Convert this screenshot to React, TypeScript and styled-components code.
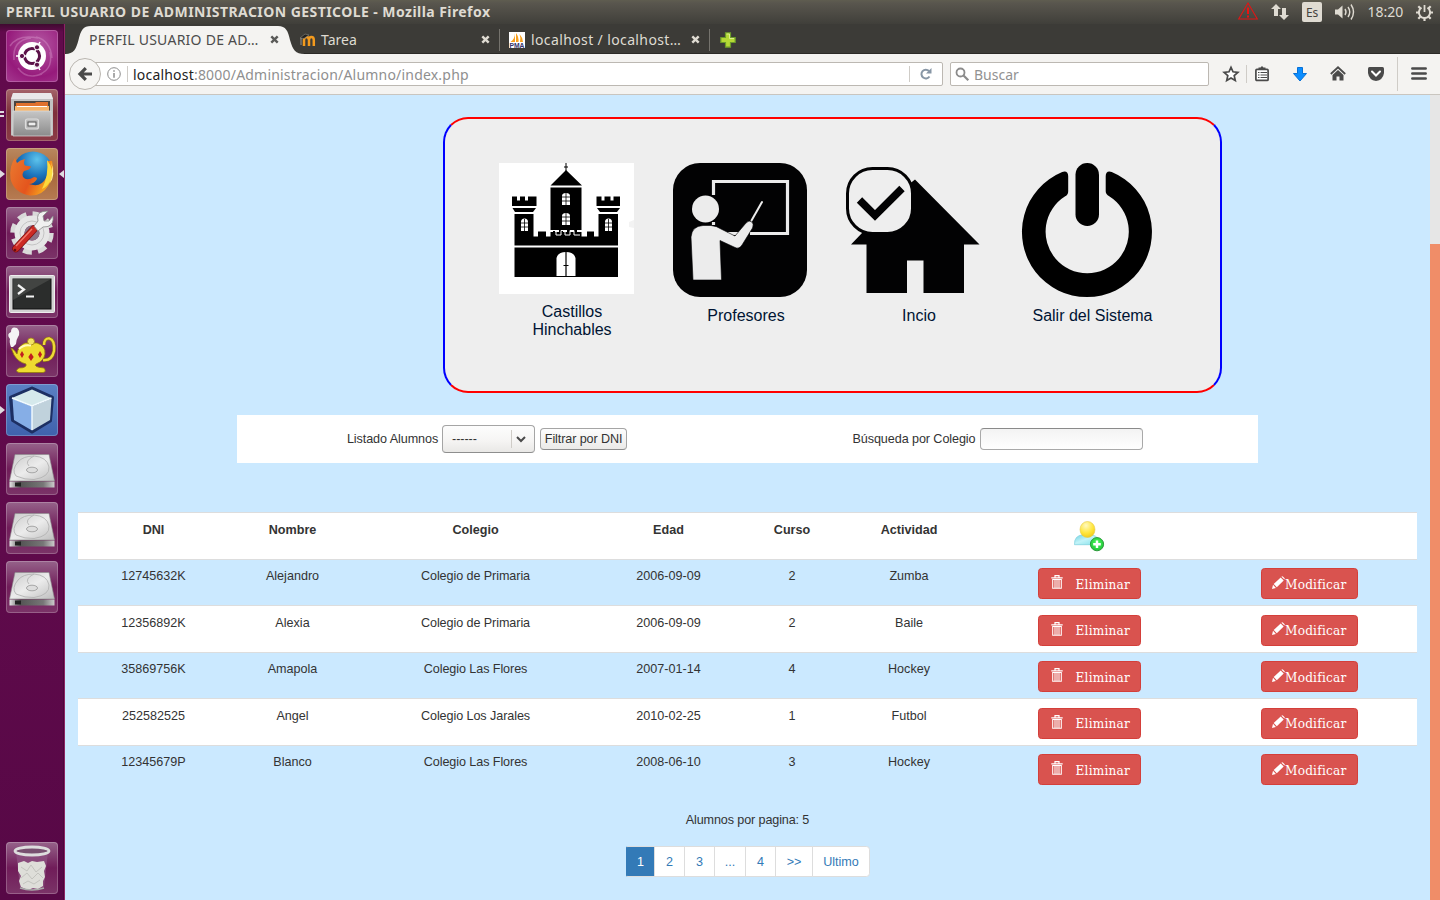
import React from 'react';
import styled, { createGlobalStyle } from 'styled-components';

const chromeFont = `'Noto Sans', 'Open Sans', sans-serif`;
const pageFont = `'Liberation Sans', Arial, sans-serif`;
const serifFont = `'DejaVu Serif Condensed', 'DejaVu Serif', serif`;

const GlobalStyle = createGlobalStyle`
  * { box-sizing: border-box; }
  body { margin: 0; background: #cbe9ff; font-family: ${pageFont}; }
  svg { display: block; flex: none; overflow: visible; }
`;

/* ---------- desktop ---------- */

const Desktop = styled.div`
  width: 1440px;
  height: 900px;
  display: flex;
  flex-direction: column;
  overflow: hidden;
`;

const TopPanel = styled.header`
  height: 24px;
  flex: none;
  display: flex;
  align-items: center;
  padding-left: 6px;
  background: linear-gradient(#5f5d50 0, #59564e 3px, #403f3a 24px);
  color: #dfdbd2;
  font-family: ${chromeFont};
`;

const WindowTitle = styled.div`
  flex: 1;
  font-size: 14px;
  font-weight: 700;
  letter-spacing: 0.44px;
  line-height: 24px;
  white-space: nowrap;
`;

const Indicators = styled.div`
  display: flex;
  align-items: center;
  height: 24px;
`;

const Indicator = styled.div<{ $w: number }>`
  width: ${(p) => p.$w}px;
  display: flex;
  justify-content: center;
`;

const Keyboard = styled.div`
  width: 20px;
  height: 20px;
  border-radius: 2px;
  background: #dfdbd2;
  color: #45433e;
  font-size: 12px;
  line-height: 21px;
  text-align: center;
  letter-spacing: -0.3px;
`;

const Clock = styled.span`
  margin-left: 1px;
  font-size: 14px;
  line-height: 24px;
`;

const Body = styled.div`
  flex: 1;
  display: flex;
  min-height: 0;
`;

const Launcher = styled.nav`
  width: 65px;
  flex: none;
  display: flex;
  flex-direction: column;
  gap: 7px;
  padding: 6px 0 6px 6px;
  border-right: 1px solid #8d2464;
  background: linear-gradient(#3f0a30 0, #620a4c 8px, #5f0a4b 60%, #570846 100%);
  box-shadow: inset -1px 0 0 #4d063c;
`;

const Tile = styled.div<{ $bg: string; $last?: boolean }>`
  position: relative;
  width: 52px;
  height: 52px;
  border-radius: 4px;
  background: ${(p) => p.$bg};
  box-shadow: inset 0 0 0 1px rgba(255, 255, 255, 0.22);
  ${(p) => p.$last && 'margin-top: auto;'}
`;

const Pip = styled.i<{ $side: 'left' | 'right'; $y?: number }>`
  position: absolute;
  top: ${(p) => p.$y ?? 22}px;
  ${(p) => (p.$side === 'left' ? 'left: -6px;' : 'right: -6px;')}
  border: 4px solid transparent;
  ${(p) =>
    p.$side === 'left'
      ? 'border-left: 5px solid #dfdbe0; border-right: 0;'
      : 'border-right: 5px solid #dfdbe0; border-left: 0;'}
`;

const Dash = styled.i<{ $y: number }>`
  position: absolute;
  left: -6px;
  top: ${(p) => p.$y}px;
  width: 4px;
  height: 2px;
  background: #dfdbe0;
`;

/* ---------- browser ---------- */

const Browser = styled.section`
  flex: 1;
  display: flex;
  flex-direction: column;
  min-width: 0;
`;

const TabStrip = styled.div`
  height: 30px;
  flex: none;
  display: flex;
  background: #3c3b37;
  box-shadow: inset 0 -1px 0 #2b2a27;
  font-family: ${chromeFont};
  font-size: 14px;
`;

const Tab = styled.div<{ $w: number; $active?: boolean; $line?: boolean }>`
  position: relative;
  width: ${(p) => p.$w}px;
  height: 30px;
  display: flex;
  align-items: center;
  padding: 1px 10px 0 ${(p) => (p.$active ? 24 : 0)}px;
  color: ${(p) => (p.$active ? '#4c4c4c' : '#dfdbd2')};
  white-space: nowrap;
  ${(p) =>
    p.$line &&
    `&::after { content: ''; position: absolute; right: 0; top: 5px; width: 1px; height: 22px; background: #75736d; }`}
`;

const TabShape = styled.svg`
  position: absolute;
  left: 0;
  top: 2px;
`;

const TabLabel = styled.span<{ $ls?: number }>`
  position: relative;
  flex: 1;
  margin-bottom: 1px;
  letter-spacing: ${(p) => p.$ls ?? 0}px;
`;

const Favicon = styled.span`
  display: flex;
  margin-right: 5px;
`;

const CloseWrap = styled.span`
  position: relative;
  display: flex;
`;

const NewTab = styled.div`
  display: flex;
  align-items: center;
  padding: 2px 0 0 10px;
`;

const Toolbar = styled.div`
  height: 41px;
  flex: none;
  display: flex;
  align-items: center;
  padding: 0 0 1px 4px;
  background: #f4f3f1;
  border-bottom: 1px solid #c9c5bf;
  font-family: ${chromeFont};
  font-size: 14px;
`;

const BackButton = styled.div`
  position: relative;
  z-index: 1;
  width: 32px;
  height: 32px;
  flex: none;
  border: 1px solid #bab6b0;
  border-radius: 50%;
  background: #f6f5f3;
  display: flex;
  align-items: center;
  justify-content: center;
`;

const Field = styled.div<{ $w: number; $overlap?: boolean }>`
  width: ${(p) => p.$w}px;
  height: 24px;
  flex: none;
  display: flex;
  align-items: center;
  border: 1px solid #bcb8b2;
  border-radius: 2px;
  background: #fff;
  ${(p) => (p.$overlap ? 'margin-left: -8px; padding-left: 13px;' : 'margin-left: 7px; padding-left: 4px;')}
  color: #8f8f8f;
`;

const Rule = styled.i<{ $h: number; $m?: string }>`
  width: 1px;
  height: ${(p) => p.$h}px;
  background: #cfccc7;
  margin: ${(p) => p.$m ?? '0'};
`;

const Address = styled.span`
  flex: 1;
  padding-top: 1px;
  white-space: nowrap;
  letter-spacing: 0.2px;
  b {
    font-weight: 400;
    color: #222;
  }
`;

const Placeholder = styled.span`
  margin-left: 5px;
  padding-top: 1px;
  color: #929292;
`;

const Tools = styled.div`
  flex: 1;
  display: flex;
  align-items: center;
`;

const Tool = styled.span<{ $w: number }>`
  width: ${(p) => p.$w}px;
  display: flex;
  justify-content: center;
`;

/* ---------- page ---------- */

const Viewport = styled.div`
  flex: 1;
  display: flex;
  min-height: 0;
`;

const Page = styled.main`
  width: 1365px;
  padding: 22px 13px 0;
  background: #cbe9ff;
  color: #333;
  font-size: 12.6px;
  line-height: 18px;
`;

const Scrollbar = styled.div`
  width: 10px;
  padding-top: 149px;
  background: #e6e6e6;
`;

const Thumb = styled.div`
  height: 100%;
  background: #f08d68;
`;

const MenuPanel = styled.div`
  width: 779px;
  height: 276px;
  margin-left: 365px;
  padding: 44px 0 0 41px;
  display: grid;
  grid-template-columns: 174px 173px 173.5px 173px;
  align-items: start;
  border: 2px solid;
  border-color: #f00 #00f;
  border-radius: 25px;
  background: #eee;
`;

const MenuItem = styled.a<{ $gap: number }>`
  display: flex;
  flex-direction: column;
  gap: ${(p) => p.$gap}px;
  padding-left: 13px;
  color: #001433;
  font-size: 16px;
  line-height: 18px;
`;

const Caption = styled.span`
  width: 146px;
  text-align: center;
  white-space: pre-line;
`;

const FilterBar = styled.form`
  width: 1021px;
  height: 48px;
  margin: 22px 0 49.4px 159px;
  display: grid;
  grid-template-columns: 500px 521px;
  background: #fff;
`;

const FilterGroup = styled.div`
  display: flex;
  align-items: center;
  justify-content: center;
  gap: 4px;
  white-space: nowrap;
  letter-spacing: -0.08px;
`;

const Combo = styled.div`
  width: 93px;
  height: 28px;
  display: flex;
  align-items: center;
  border: 1px solid #a5a5a5;
  border-bottom-color: #8e8e8e;
  border-radius: 4px;
  background: linear-gradient(#fdfdfd, #f6f5f4 55%, #e9e8e6);
  padding-left: 9px;
`;

const ComboValue = styled.span`
  flex: 1;
`;

const FilterButton = styled.button`
  width: 87px;
  height: 22px;
  margin-left: 1px;
  padding: 0;
  border: 1px solid #a5a5a5;
  border-bottom-color: #8e8e8e;
  border-radius: 4px;
  background: linear-gradient(#fdfdfd, #ebeae8);
  color: #333;
  font: 12.6px/18px ${pageFont};
  letter-spacing: -0.1px;
  white-space: nowrap;
`;

const SearchInput = styled.input`
  width: 163px;
  height: 22px;
  border: 1px solid #a9a9a9;
  border-top-color: #8a8a8a;
  border-radius: 4px;
  background: linear-gradient(#f3f3f3, #fff);
`;

const Table = styled.div`
  width: 1339px;
`;

const Row = styled.div<{ $head?: boolean; $white?: boolean }>`
  height: 46.5px;
  display: grid;
  grid-template-columns: 151px 127px 239px 147px 100px 134px 226px 215px;
  border-top: 1px solid #ddd;
  background: ${(p) => (p.$white ? '#fff' : 'transparent')};
  font-weight: ${(p) => (p.$head ? 700 : 400)};
`;

const Cell = styled.div<{ $tight?: boolean }>`
  display: flex;
  justify-content: center;
  align-items: flex-start;
  padding-top: 7.4px;
  letter-spacing: ${(p) => (p.$tight ? '-0.08px' : 'normal')};
`;

const DangerButton = styled.button<{ $w: number; $pad: number; $gap?: number }>`
  width: ${(p) => p.$w}px;
  height: 31px;
  margin-top: 1px;
  padding: 0 0 0 ${(p) => p.$pad}px;
  display: flex;
  align-items: center;
  gap: ${(p) => p.$gap ?? 0}px;
  border: 1px solid #d43f3a;
  border-radius: 3.6px;
  background: #d9534f;
  color: #fff;
  font-family: ${serifFont};
  font-stretch: condensed;
  font-size: 13.5px;
  letter-spacing: 0.2px;
  line-height: 18px;
  svg {
    margin-bottom: 3px;
  }
`;

const PageInfo = styled.p`
  width: 1339px;
  margin: 19.6px 0 17px;
  text-align: center;
  letter-spacing: -0.12px;
`;

const Pager = styled.div`
  display: flex;
  height: 31px;
  margin-left: 547px;
`;

const PageLink = styled.a<{ $w: number; $active?: boolean }>`
  width: ${(p) => p.$w}px;
  border: 1px solid ${(p) => (p.$active ? '#337ab7' : '#ddd')};
  margin-left: ${(p) => (p.$active ? 1 : -1)}px;
  background: ${(p) => (p.$active ? '#337ab7' : '#fff')};
  color: ${(p) => (p.$active ? '#fff' : '#337ab7')};
  line-height: 30px;
  text-align: center;
  &:first-child {
    border-color: #ddd #337ab7 #ddd #337ab7;
    border-radius: 2px 0 0 2px;
  }
  &:last-child {
    border-radius: 0 3.6px 3.6px 0;
  }
`;

/* ---------- drawings ---------- */

const Close = ({ color }: { color: string }) => (
  <svg width="9" height="9" viewBox="0 0 9 9">
    <path d="M1.3 1.3l6.4 6.4M7.7 1.3L1.3 7.7" stroke={color} strokeWidth="2.4" />
  </svg>
);

const MoodleIcon = () => (
  <svg width="16" height="16" viewBox="0 0 16 16">
    <path d="M4 14V8Q4 5 6.400 5T9 8V14M9 8Q9 5 11.400 5T13.800 8V14" fill="none" stroke="#f39a1d" strokeWidth="2.500" />
    <path d="M0 6l5-4 4 1-5 3.500z" fill="#222" stroke="#8a8880" strokeWidth=".6" />
    <path d="M1 6v7" stroke="#aaa" strokeWidth=".8" />
  </svg>
);

const PmaText = styled.text`
  font: 700 6.5px ${pageFont};
`;

const PmaIcon = () => (
  <svg width="16" height="16" viewBox="0 0 16 16">
    <rect width="16" height="16" fill="#fff" />
    <path d="M6 1C6 5 4.500 8 1.500 10H6zM7 1q3 4 2.500 9H7zM10.500 2q3.500 4 3.500 8h-3q1-4-.5-8z" fill="#f7a01d" />
    <PmaText x="0.5" y="16" textLength="15" lengthAdjust="spacingAndGlyphs" fill="#34356b">PMA</PmaText>
  </svg>
);

const CastleIcon = () => (
  <svg width="135" height="131" viewBox="0 0 135 131">
    <rect width="135" height="131" fill="#fff" />
    <path
      d="M67 7L83 22.500H51.500zM51.500 24.500H82.500V67H78V72H75V67H71V72H68V67H64V72H60V67H56V72H54V67H51.500z
      M13 33.500h5v4h3v-4h5v4h3v-4h8.500V43H13zM13.500 45h23.500l-3 4H16zM97.500 33.500h5v4h3v-4h6v4h3v-4h6.500V43H97.500zM98 45h23l-3 4h-17z
      M15.500 51h19v22.500H39v-5h8v5h4.500V69h31v4.500H88v-5h7v5h4.500V51H119V82.500H15.500z
      M15.500 84.500H119V114H15.500z"
      fill="#000"
    />
    <path d="M67 0v8M65 4h4" stroke="#000" strokeWidth="1" />
    <path d="M52 67.500h5v4.500h5v-4.500h4v4.500h5v-4.500h4v4.500h6" fill="none" stroke="#fff" strokeWidth="1" />
    <path
      d="M63 42v-9q0-3 4-3t4 3v9zM63 62v-9q0-3 4-3t4 3v9zM22 68v-9q0-3.500 3.500-3.500T29 59v9zM106 68v-9q0-3.500 3.500-3.500T113 59v9z
      M57.500 113V95q1.500-6 9.500-6t9.500 6v18z"
      fill="#fff"
    />
    <path
      d="M67 30v12M63 34h8M63 38h8M67 50v12M63 54h8M63 58h8M25.500 56v12M22 60h7M22 64h7M109.500 56v12M106 60h7M106 64h7"
      stroke="#000"
      strokeWidth=".8"
    />
    <path d="M67 89v24M64.500 102.500h5" stroke="#000" strokeWidth="1.2" />
    <path d="M130 59l5-2v8l-5-1z" fill="#f3f3f3" />
  </svg>
);

const TeacherIcon = () => (
  <svg width="134" height="134" viewBox="0 0 134 134">
    <rect width="134" height="134" rx="27" fill="#020203" />
    <path d="M40.500 32V18.500H114.500V70.500H77M66 70.500H55M40.500 62V59" fill="none" stroke="#ececec" strokeWidth="3.2" />
    <circle cx="32.500" cy="46" r="14.500" fill="#020203" />
    <circle cx="32.500" cy="46" r="13.500" fill="#ececec" />
    <path
      d="M18 74Q19 63 30 62.500H38Q44 63 48 66L62 73 73 60Q76 56.500 79 59 81 61 79.500 65L69 82Q66 87 61 84L47 77.500 48.500 117H20z"
      fill="#ececec"
      stroke="#020203"
      strokeWidth=".6"
    />
    <path d="M78.500 57.500L89 39" stroke="#ececec" strokeWidth="2" strokeLinecap="round" />
  </svg>
);

const HomeCheckIcon = () => (
  <svg width="134" height="134" viewBox="0 0 134 134">
    <path d="M69 16.500L133.500 81.500H118V130H77.500V97.500H61V130H20.500V81.500H5L62 22z" fill="#020203" />
    <rect x="1.500" y="5.500" width="65" height="65" rx="25" fill="#eee" stroke="#020203" strokeWidth="3" />
    <path d="M13.500 37L29 52.500 56 25.500" fill="none" stroke="#020203" strokeWidth="7.600" />
  </svg>
);

const PowerIcon = () => (
  <svg width="134" height="134" viewBox="0 0 134 134">
    <path
      d="M41.500 9.700Q47.500 8 47.500 14V29Q47.500 32.500 44.500 34A41.600 41.600 0 1 0 88.500 34Q85 32 85 29V14Q85 8 91 9.700A65 65 0 1 1 41.500 9.700z"
      fill="#000"
      transform="translate(0.7 -0.7)"
    />
    <rect x="55.500" y="0" width="23.500" height="63" rx="11.700" fill="#000" />
  </svg>
);

const AddUserIcon = () => (
  <svg width="30" height="32" viewBox="0 0 30 32">
    <defs>
      <radialGradient id="head" cx=".4" cy=".25" r=".8">
        <stop offset="0" stopColor="#fff9c0" />
        <stop offset=".6" stopColor="#ffe63a" />
        <stop offset="1" stopColor="#f0c818" />
      </radialGradient>
      <linearGradient id="torso" x2="1" y2="1">
        <stop offset="0" stopColor="#6fd2e2" />
        <stop offset=".45" stopColor="#c2f3f8" />
        <stop offset="1" stopColor="#7adfe8" />
      </linearGradient>
      <radialGradient id="badge" cx=".5" cy=".4" r=".6">
        <stop offset="0" stopColor="#4dfa5e" />
        <stop offset="1" stopColor="#20c438" />
      </radialGradient>
    </defs>
    <g transform="translate(0 -0.8)">
      <path d="M.5 24.500Q0 15 9.500 14.500H18Q26 17 26 24.500z" fill="url(#torso)" stroke="#7cd0dc" strokeWidth=".7" />
      <ellipse cx="13.500" cy="9.300" rx="7.500" ry="8" fill="url(#head)" stroke="#e6c94a" strokeWidth=".6" />
      <circle cx="23" cy="24" r="6.600" fill="url(#badge)" stroke="#2d9a3c" strokeWidth="1" />
      <path d="M23 20.200v7.600M19.200 24h7.600" stroke="#fff" strokeWidth="2.400" />
    </g>
  </svg>
);

const TrashGlyph = () => (
  <svg width="12" height="14" viewBox="0 0 12 14">
    <path d="M.3 2.800h11.400M4 2.500V.7h4v1.800" fill="none" stroke="#fff" strokeWidth="1.200" />
    <path d="M1.700 4v9.300h8.600V4M4 4.500v9M6 4.500v9M8 4.500v9M1.500 4.500h9" fill="none" stroke="#fff" strokeWidth="1.050" />
  </svg>
);

const PencilGlyph = () => (
  <svg width="13" height="13" viewBox="0 0 13 13">
    <path d="M0 13l1-4.200L3.900 12zM1.700 8L8.700 1.400l3 3L4.800 11.200zM9.400.8q.8-1 1.700-.1l1.300 1.300q.8.8 0 1.600z" fill="#fff" />
  </svg>
);

const Disk = () => (
  <svg width="52" height="52" viewBox="0 0 52 52">
    <defs>
      <linearGradient id="diskTop" x2="1" y2="1">
        <stop offset="0" stopColor="#c9c9c9" />
        <stop offset=".5" stopColor="#ececec" />
        <stop offset="1" stopColor="#bdbdbd" />
      </linearGradient>
      <linearGradient id="diskFront">
        <stop offset="0" stopColor="#e6e6e6" />
        <stop offset=".25" stopColor="#555" />
        <stop offset=".75" stopColor="#777" />
        <stop offset="1" stopColor="#ccc" />
      </linearGradient>
    </defs>
    <path d="M9 11.500H43L48.500 38H3.500z" fill="url(#diskTop)" stroke="#8b8b8b" strokeWidth=".6" />
    <path d="M3.500 38.500h45v6h-45z" fill="url(#diskFront)" />
    <path d="M9 39.500h6v4H9z" fill="#222" />
    <path d="M10 33Q5 27 12 19 17 13 28 13 41 14 43 24 44 34 28 36.500 19 37 10 33M28 13Q18 18 23 23" fill="none" stroke="#b3b3b3" strokeWidth=".9" />
    <ellipse cx="26" cy="27" rx="5.500" ry="2.800" fill="#ddd" stroke="#a6a6a6" />
  </svg>
);

const UbuntuIcon = () => (
  <svg width="52" height="52" viewBox="0 0 52 52">
    <path d="M8 30Q6 10 25 8M44 22Q48 42 28 46M12 38Q20 50 36 44M30 7Q44 10 46 28M4 16Q12 4 32 8" fill="none" stroke="#e2a9d6" strokeWidth="1.500" opacity=".35" />
    <circle cx="26" cy="26" r="14" fill="#fff" />
    <circle cx="26" cy="26" r="7.500" fill="none" stroke="#5c1249" strokeWidth="3.200" />
    <path d="M26 26L34 12M26 26L34 40M26 26H10" stroke="#fff" strokeWidth="1.500" />
    <circle cx="26" cy="26" r="5.800" fill="#fff" />
    <g fill="#5c1249" stroke="#fff" strokeWidth="1">
      <circle cx="16" cy="26" r="2.600" />
      <circle cx="31" cy="17.300" r="2.600" />
      <circle cx="31" cy="34.700" r="2.600" />
    </g>
  </svg>
);

const FilesIcon = () => (
  <svg width="52" height="52" viewBox="0 0 52 52">
    <defs>
      <linearGradient id="cabinet" x2="0" y2="1">
        <stop offset="0" stopColor="#c6c6c6" />
        <stop offset="1" stopColor="#8b8b8b" />
      </linearGradient>
    </defs>
    <path d="M7 4h38l2 6v36.500H5V10z" fill="#c2c2c2" />
    <path d="M7 4h38l2 6H5z" fill="#e9e9e9" />
    <path d="M8 12h36v10H8z" fill="#4b4540" />
    <path d="M10 14h19l1-1h12v9H10z" fill="#e0712d" />
    <path d="M9 17h34v5H9z" fill="#f6b46a" />
    <path d="M11 17.500h30" stroke="#fff" />
    <path d="M7 22h38v25H7z" fill="url(#cabinet)" stroke="#ddd" strokeWidth=".7" />
    <rect x="19.500" y="30" width="13" height="10" rx="2" fill="#bbb" stroke="#ddd" strokeWidth="1.200" />
    <rect x="22" y="33" width="8" height="4" fill="#eee" stroke="#555" />
  </svg>
);

const FirefoxIcon = () => (
  <svg width="52" height="52" viewBox="0 0 52 52">
    <defs>
      <radialGradient id="globe" cx=".6" cy=".2" r=".8">
        <stop offset="0" stopColor="#5cc3ec" />
        <stop offset=".5" stopColor="#1d75bd" />
        <stop offset="1" stopColor="#0c2f6b" />
      </radialGradient>
      <linearGradient id="fox" x1="0" y1="0" x2="1" y2=".4">
        <stop offset="0" stopColor="#ea7a30" />
        <stop offset=".6" stopColor="#e4551d" />
        <stop offset="1" stopColor="#f7a81e" />
      </linearGradient>
    </defs>
    <circle cx="27" cy="23.500" r="20" fill="url(#globe)" />
    <path d="M46 13Q50 28 42 38 36 48 24 47.500 8 45 4.500 31 3 18 9 10L11 15Q14 12 19 11 17 15 19 17.500L25 18.500Q24 22 18 23 15 27 18 30 22 33 28 29 31 29 31 31 28 36 23 36 35 40 40 30 44 23 42 13z" fill="url(#fox)" />
    <path d="M41 12Q49 22 45 32 41 39 36 41 43 27 41 12z" fill="#fbd93d" />
    <path d="M45 14Q50 27 44 35 48 24 45 14z" fill="#fff3a0" />
  </svg>
);

const SettingsIcon = () => (
  <svg width="52" height="52" viewBox="0 0 52 52">
    <circle cx="26" cy="26" r="18.500" fill="none" stroke="#d9d9d9" strokeWidth="6.500" strokeDasharray="8.500 6.030" />
    <circle cx="26" cy="26" r="12.500" fill="none" stroke="#e6e6e6" strokeWidth="10" />
    <circle cx="26" cy="26" r="12" fill="none" stroke="#c4c4c4" strokeWidth="1" />
    <circle cx="26" cy="26" r="7.500" fill="#8b7387" />
    <path d="M10 41.500L28 22" stroke="#7e1212" strokeWidth="7.500" strokeLinecap="round" />
    <path d="M10 41.500L28 22" stroke="#cc2a24" strokeWidth="6" strokeLinecap="round" />
    <path d="M10 39L26 22" stroke="#f07a6d" strokeWidth="1.300" />
    <path d="M28 19L32 14Q30 6 37 4.500L42 4 37 9 38 14 43 14 47 9Q48 17 42 19.500L37 20 32 24z" fill="#f0f0f0" stroke="#888" strokeWidth=".8" />
    <circle cx="9" cy="43" r="1.300" fill="#651010" />
  </svg>
);

const TerminalIcon = () => (
  <svg width="52" height="52" viewBox="0 0 52 52">
    <rect x="3.500" y="9.500" width="45" height="37" rx="1" fill="#d2d2d2" stroke="#eee" />
    <rect x="7" y="13" width="38" height="30" fill="#2b2d2c" stroke="#111" />
    <path d="M7 13h38L7 34z" fill="#525452" opacity=".6" />
    <path d="M12 19l6 4.500-6 4.500M20 30.500h8" fill="none" stroke="#f3f3f3" strokeWidth="2.200" />
  </svg>
);

const LampIcon = () => (
  <svg width="52" height="52" viewBox="0 0 52 52">
    <path d="M38 20Q38 13 43.500 13.500 49 15 48 26 46 36 37 35" fill="none" stroke="#8b7610" strokeWidth="3.600" />
    <path d="M38 20Q38 13 43.500 13.500 49 15 48 26 46 36 37 35" fill="none" stroke="#efd839" strokeWidth="2.300" />
    <path d="M5 23Q8 24 11 29 12 21 19 18H31Q40 21 39 29 38 36 30 39 27 42 38 43 41 47 37 47.500H13Q8 46 13 43 21 43 20 39 12 37 8 30z" fill="#eedb30" stroke="#947b0b" strokeWidth=".8" />
    <circle cx="25" cy="16.500" r="3.500" fill="#f4e463" stroke="#9c8110" strokeWidth=".8" />
    <path d="M13 24Q18 19 25 20.500" fill="none" stroke="#fffab8" strokeWidth="2" />
    <path d="M16 26l2 3.500L16 33l-2-3.500zM25 28l2.700 4-2.700 4-2.700-4zM34 26l2 3.500L34 33l-2-3.500z" fill="#c21f1f" />
    <path d="M5 22Q3 17 4 14 0 9 5 7 5 1 11 3 15 7 12 12 10 15 10 19 8 21 7 22z" fill="#f5f3f5" />
  </svg>
);

const CubeIcon = () => (
  <svg width="52" height="52" viewBox="0 0 52 52">
    <path d="M26 4.500L46 13.500 44 36.500 26 47.500 7 36 5 13.500z" fill="#1d2f63" stroke="#1d2f63" strokeWidth="4" strokeLinejoin="round" />
    <path d="M26 5.500L45 14 26 22 6 14z" fill="#d5e9ec" />
    <path d="M6.500 14.500L26 22.500V46.500L8 36z" fill="#86aee6" />
    <path d="M45.500 14.500L26 22.500V46.500L44 36z" fill="#c0d2dc" />
    <path d="M6 14l20 8 19.500-8M26 22v24" fill="none" stroke="#f2fbff" strokeWidth="1.400" />
  </svg>
);

const BinIcon = () => (
  <svg width="52" height="52" viewBox="0 0 52 52">
    <path d="M10 10H42L38 45Q26 50 14 45z" fill="#8d5382" opacity=".75" />
    <path d="M12 21l6-2 4 2 4-2 5 1 7-1 2 5-2 5 1 6-2 4v5l-5 3-5-1-5 2-7-3-2-6 2-5-3-5z" fill="#deded9" />
    <path d="M15 25l6 4 4-6 5 7 6-5M15 36l6-5 5 6 6-6 5 5M17 42l5-3 6 3 6-4" fill="none" stroke="#c3c3be" strokeWidth="1" />
    <ellipse cx="26" cy="9" rx="17" ry="4" fill="#785070" stroke="#ddd" strokeWidth="2.800" />
    <path d="M14 46Q26 50 38 46" fill="none" stroke="#aaa" strokeWidth="1.500" />
  </svg>
);

const plum = 'linear-gradient(#96638a, #701c59 50%, #7b3468)';

/* ---------- data ---------- */

const students = [
  ['12745632K', 'Alejandro', 'Colegio de Primaria', '2006-09-09', '2', 'Zumba'],
  ['12356892K', 'Alexia', 'Colegio de Primaria', '2006-09-09', '2', 'Baile'],
  ['35869756K', 'Amapola', 'Colegio Las Flores', '2007-01-14', '4', 'Hockey'],
  ['252582525', 'Angel', 'Colegio Los Jarales', '2010-02-25', '1', 'Futbol'],
  ['12345679P', 'Blanco', 'Colegio Las Flores', '2008-06-10', '3', 'Hockey'],
];

const headings = ['DNI', 'Nombre', 'Colegio', 'Edad', 'Curso', 'Actividad'];

const pages: [string, number][] = [
  ['1', 29],
  ['2', 31],
  ['3', 31],
  ['...', 32],
  ['4', 31],
  ['>>', 38],
  ['Ultimo', 58],
];

export default function App() {
  return (
    <Desktop>
      <GlobalStyle />
      <TopPanel>
        <WindowTitle>PERFIL USUARIO DE ADMINISTRACION GESTICOLE - Mozilla Firefox</WindowTitle>
        <Indicators>
          <Indicator $w={32}>
            <svg width="20" height="18" viewBox="0 0 20 18">
              <path d="M10 0L19.300 16H.7z" fill="none" stroke="#e01616" strokeWidth="1.100" />
              <path d="M10 4.500v6.500M10 12.500v2" stroke="#f01010" strokeWidth="2" />
            </svg>
          </Indicator>
          <Indicator $w={32}>
            <svg width="18" height="16" viewBox="0 0 18 16">
              <path d="M5 0l5 5H7v7H3V5H0zM13 16l-5-5h3V4h4v7h3z" fill="#dfdbd2" />
            </svg>
          </Indicator>
          <Indicator $w={32}>
            <Keyboard>Es</Keyboard>
          </Indicator>
          <Indicator $w={33}>
            <svg width="20" height="16" viewBox="0 0 20 16">
              <path d="M0 5.500h3L7.500 1.500v13L3 10.500H0z" fill="#dfdbd2" />
              <path d="M10 5q2 3 0 6M13 3q3.500 5 0 10M16 .5q5 7.500 0 15" fill="none" stroke="#dfdbd2" strokeWidth="1.400" />
            </svg>
          </Indicator>
          <Indicator $w={48}>
            <Clock>18:20</Clock>
          </Indicator>
          <Indicator $w={31}>
            <svg width="17" height="17" viewBox="0 0 17 17">
              <path d="M5.500 3.700a5.600 5.600 0 1 0 6 0" fill="none" stroke="#dfdbd2" strokeWidth="2" />
              <path d="M8.500 1v7" stroke="#dfdbd2" strokeWidth="1.800" />
              <path d="M2.300 2.300l2 2M14.700 2.300l-2 2M0 8.500h3M17 8.500h-3M2.300 14.700l2-2M14.700 14.700l-2-2M8.500 17v-3" stroke="#dfdbd2" strokeWidth="2.200" />
            </svg>
          </Indicator>
        </Indicators>
      </TopPanel>

      <Body>
        <Launcher>
          <Tile $bg="radial-gradient(circle at 60% 30%, #b65ba5, #961a7b 65%, #a53a90)"><UbuntuIcon /></Tile>
          <Tile $bg="linear-gradient(#a5656a, #7e2f3b 45%, #8c3b46)">
            <Dash $y={21.5} /><Dash $y={26} />
            <FilesIcon />
          </Tile>
          <Tile $bg="linear-gradient(#b9885f, #a8683b 50%, #b67b52)">
            <Pip $side="left" /><FirefoxIcon /><Pip $side="right" />
          </Tile>
          <Tile $bg={plum}><SettingsIcon /></Tile>
          <Tile $bg={plum}><TerminalIcon /></Tile>
          <Tile $bg={plum}><LampIcon /></Tile>
          <Tile $bg="linear-gradient(#5b80c4, #3f62ad)"><Pip $side="left" /><CubeIcon /></Tile>
          <Tile $bg={plum}><Disk /></Tile>
          <Tile $bg={plum}><Disk /></Tile>
          <Tile $bg={plum}><Disk /></Tile>
          <Tile $bg={plum} $last><BinIcon /></Tile>
        </Launcher>

        <Browser>
          <TabStrip>
            <Tab $w={235} $active>
              <TabShape width="240" height="28" viewBox="0 0 240 28">
                <path d="M0 28C9 28 11 23 13.500 14C16 4 18 0 26 0H213C221 0 223 5 225 14C228 24 230 28 240 28z" fill="#f4f3f1" />
              </TabShape>
              <TabLabel $ls={0.25}>PERFIL USUARIO DE AD…</TabLabel>
              <CloseWrap style={{ marginRight: 11 }}><Close color="#5a5a58" /></CloseWrap>
            </Tab>
            <Tab $w={200} $line>
              <Favicon><MoodleIcon /></Favicon>
              <TabLabel>Tarea</TabLabel>
              <CloseWrap><Close color="#dfdbd2" /></CloseWrap>
            </Tab>
            <Tab $w={210} $line>
              <Favicon style={{ marginLeft: 9, marginRight: 6 }}><PmaIcon /></Favicon>
              <TabLabel $ls={0.38}>localhost / localhost…</TabLabel>
              <CloseWrap><Close color="#dfdbd2" /></CloseWrap>
            </Tab>
            <NewTab>
              <svg width="16" height="16" viewBox="0 0 16 16">
                <path d="M5.500 .8h5v4.700h4.700v5h-4.700v4.700h-5v-4.700H.8v-5h4.700z" fill="#b5d935" stroke="#6b9a2a" strokeWidth="1.200" />
                <path d="M6.500 2h3v4.500H14" fill="none" stroke="#dcf08a" />
              </svg>
            </NewTab>
          </TabStrip>

          <Toolbar>
            <BackButton>
              <svg width="14" height="14" viewBox="0 0 14 14">
                <path d="M14 7H3M7.800 1.200L2 7l5.800 5.800" fill="none" stroke="#4a4a4a" strokeWidth="3.200" />
              </svg>
            </BackButton>
            <Field $w={850} $overlap>
              <svg width="14" height="14" viewBox="0 0 14 14">
                <circle cx="7" cy="7" r="6.300" fill="none" stroke="#8d8d8d" />
                <path d="M7 3.200v1.600M7 6v4.800" stroke="#8d8d8d" strokeWidth="1.500" />
              </svg>
              <Rule $h={16} $m="0 5px 0 6px" />
              <Address><b>localhost</b>:8000/Administracion/Alumno/index.php</Address>
              <Rule $h={16} $m="0 10px 0 0" />
              <svg width="12" height="12" viewBox="0 0 12 12" style={{ marginRight: 10 }}>
                <path d="M9.500 8.500A4.400 4.400 0 1 1 9 3" fill="none" stroke="#8796a5" strokeWidth="2" />
                <path d="M11.500 0v5.500H6z" fill="#8796a5" />
              </svg>
            </Field>
            <Field $w={259}>
              <svg width="14" height="14" viewBox="0 0 14 14">
                <circle cx="5.500" cy="5.500" r="4" fill="none" stroke="#8b8b8b" strokeWidth="1.800" />
                <path d="M8.500 8.500l4.800 4.800" stroke="#8b8b8b" strokeWidth="2.200" />
              </svg>
              <Placeholder>Buscar</Placeholder>
            </Field>
            <Tools>
              <Tool $w={37} style={{ paddingLeft: 7 }}>
                <svg width="16" height="16" viewBox="0 0 16 16">
                  <path d="M8 1.300l2 4.500 4.900.5-3.700 3.300 1.100 4.900L8 12l-4.300 2.500 1.100-4.900L1.100 6.300 6 5.800z" fill="#fff" stroke="#4a4a4a" strokeWidth="1.700" />
                </svg>
              </Tool>
              <Rule $h={18} />
              <Tool $w={30}>
                <svg width="14" height="16" viewBox="0 0 14 16">
                  <rect x=".9" y="3.400" width="12.200" height="11" rx="1" fill="#fff" stroke="#4a4a4a" strokeWidth="1.700" />
                  <path d="M3.500 3.500V1.500h2L7 0l1.500 1.500h2v2z" fill="#4a4a4a" />
                  <path d="M3 6.500h1.500M3 9h1.500M3 11.500h1.500M5.500 6.500H12M5.500 9H12M5.500 11.500H12" stroke="#4a4a4a" strokeWidth="1.200" />
                </svg>
              </Tool>
              <Tool $w={46}>
                <svg width="14" height="14" viewBox="0 0 14 14">
                  <path d="M4.500.5h5v6h4L7 14 .5 6.500h4z" fill="#0b8dff" stroke="#0670d6" />
                </svg>
              </Tool>
              <Tool $w={30}>
                <svg width="16" height="15" viewBox="0 0 16 15">
                  <path d="M.8 8L8 1.300 15.200 8" fill="none" stroke="#4a4a4a" strokeWidth="1.800" />
                  <path d="M8 4l5.500 5v5.500H9.500v-4h-3v4h-4V9z" fill="#4a4a4a" />
                </svg>
              </Tool>
              <Tool $w={46}>
                <svg width="16" height="14" viewBox="0 0 16 14">
                  <path d="M1.500 0h13Q16 0 16 1.500V6Q15 13 8 14 1 13 0 6V1.500Q0 0 1.500 0z" fill="#4a4a4a" />
                  <path d="M4 4.500l4 4 4-4" fill="none" stroke="#fff" strokeWidth="2" strokeLinecap="round" />
                </svg>
              </Tool>
              <Rule $h={34} $m="0 0 0 -2px" />
              <Tool $w={41}>
                <svg width="16" height="13" viewBox="0 0 16 13">
                  <path d="M1.300 1.500h13.400M1.300 6.500h13.400M1.300 11.500h13.400" stroke="#4a4a4a" strokeWidth="2.500" strokeLinecap="round" />
                </svg>
              </Tool>
            </Tools>
          </Toolbar>

          <Viewport>
            <Page>
              <MenuPanel>
                <MenuItem $gap={9}>
                  <CastleIcon />
                  <Caption>{'Castillos\nHinchables'}</Caption>
                </MenuItem>
                <MenuItem $gap={10}>
                  <TeacherIcon />
                  <Caption>Profesores</Caption>
                </MenuItem>
                <MenuItem $gap={10}>
                  <HomeCheckIcon />
                  <Caption>Incio</Caption>
                </MenuItem>
                <MenuItem $gap={10}>
                  <PowerIcon />
                  <Caption>Salir del Sistema</Caption>
                </MenuItem>
              </MenuPanel>

              <FilterBar>
                <FilterGroup>
                  <span>Listado Alumnos</span>
                  <Combo>
                    <ComboValue>------</ComboValue>
                    <Rule $h={18} />
                    <svg width="10" height="7" viewBox="0 0 10 7" style={{ margin: '0 8px 0 4px' }}>
                      <path d="M1 1l4 4 4-4" fill="none" stroke="#4a4a4a" strokeWidth="2" />
                    </svg>
                  </Combo>
                  <FilterButton type="button">Filtrar por DNI</FilterButton>
                </FilterGroup>
                <FilterGroup>
                  <span>Búsqueda por Colegio</span>
                  <SearchInput />
                </FilterGroup>
              </FilterBar>

              <Table>
                <Row $head $white>
                  {headings.map((h) => (
                    <Cell key={h}>{h}</Cell>
                  ))}
                  <Cell><AddUserIcon /></Cell>
                  <Cell />
                </Row>
                {students.map((student, i) => (
                  <Row key={student[0]} $white={i % 2 === 1}>
                    {student.map((value, c) => (
                      <Cell key={c} $tight={c === 2}>{value}</Cell>
                    ))}
                    <Cell>
                      <DangerButton $w={103} $pad={12} $gap={13}>
                        <TrashGlyph />
                        Eliminar
                      </DangerButton>
                    </Cell>
                    <Cell>
                      <DangerButton $w={97} $pad={10}>
                        <PencilGlyph />
                        Modificar
                      </DangerButton>
                    </Cell>
                  </Row>
                ))}
              </Table>

              <PageInfo>Alumnos por pagina: 5</PageInfo>
              <Pager>
                {pages.map(([label, width], i) => (
                  <PageLink key={label} $w={width} $active={i === 0}>
                    {label}
                  </PageLink>
                ))}
              </Pager>
            </Page>
            <Scrollbar>
              <Thumb />
            </Scrollbar>
          </Viewport>
        </Browser>
      </Body>
    </Desktop>
  );
}
